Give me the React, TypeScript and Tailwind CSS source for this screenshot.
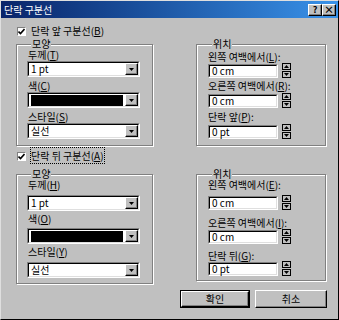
import React from 'react';

const raised =
  'bg-[#c0c0c0] border border-t-white border-l-white border-r-black border-b-black shadow-[inset_-1px_-1px_0_#808080]';

function U({ c }: { c: string }) {
  return <span className="underline underline-offset-1">{c}</span>;
}

function Label({ children, className = '' }: { children: React.ReactNode; className?: string }) {
  return <div className={`h-[12px] leading-[12px] whitespace-nowrap ${className}`}>{children}</div>;
}

function Arrow() {
  return (
    <svg width="5" height="3" viewBox="0 0 5 3">
      <path d="M0 0H5L2.5 3Z" fill="#000" />
    </svg>
  );
}

function Combo({ children, className = '' }: { children: React.ReactNode; className?: string }) {
  return (
    <div
      className={`flex h-[16px] w-[113px] border border-t-[#808080] border-l-[#808080] border-r-white border-b-white ${className}`}
    >
      <div className="flex flex-1 border border-t-black border-l-black border-r-[#dfdfdf] border-b-[#dfdfdf] bg-white">
        <div className="flex flex-1 items-center pl-[2px] leading-[12px]">{children}</div>
        <div className={`flex h-full w-[13px] items-center justify-center ${raised}`}>
          <Arrow />
        </div>
      </div>
    </div>
  );
}

function Spin() {
  return (
    <div className="ml-[4px] flex h-[15px] w-[9px] flex-col">
      <div className="flex h-[7px] items-center justify-center border border-black bg-[#c0c0c0]">
        <svg width="5" height="3" viewBox="0 0 5 3">
          <path d="M2.5 0L5 3H0Z" fill="#000" />
        </svg>
      </div>
      <div className="mt-[1px] flex h-[7px] items-center justify-center border border-black bg-[#c0c0c0]">
        <Arrow />
      </div>
    </div>
  );
}

function Field({ value, className = '' }: { value: string; className?: string }) {
  return (
    <div className={`flex items-center ${className}`}>
      <div className="h-[14px] w-[70px] border border-t-[#808080] border-l-[#808080] border-r-white border-b-white">
        <div className="flex h-full items-center border border-t-black border-l-black border-r-[#dfdfdf] border-b-[#dfdfdf] bg-white pl-[2px] leading-[12px]">
          {value}
        </div>
      </div>
      <Spin />
    </div>
  );
}

function CheckRow({ children, className = '' }: { children: React.ReactNode; className?: string }) {
  return (
    <div className={`flex h-[12px] items-center pl-[16px] ${className}`}>
      <div className="flex h-[9px] w-[9px] items-center justify-center border border-t-[#808080] border-l-[#808080] border-r-white border-b-white bg-white">
        <svg width="7" height="7" viewBox="0 0 7 7">
          <path d="M0.5 3.5L2.5 5.5L6.5 1" stroke="#000" strokeWidth="1.6" fill="none" />
        </svg>
      </div>
      <span className="ml-[5px] whitespace-nowrap leading-[12px]">{children}</span>
    </div>
  );
}

function Group({
  title,
  children,
  className = '',
}: {
  title: string;
  children: React.ReactNode;
  className?: string;
}) {
  return (
    <fieldset
      className={`border border-[#808080] shadow-[inset_1px_1px_0_#fff,1px_1px_0_#fff] ${className}`}
    >
      <legend className="ml-[4px] bg-[#c0c0c0] px-[1px] leading-[10px]">{title}</legend>
      {children}
    </fieldset>
  );
}

export default function App() {
  return (
    <div className="h-[320px] w-[339px] border border-t-[#dfdfdf] border-l-[#dfdfdf] border-r-black border-b-black bg-[#c0c0c0] font-['Noto_Sans_CJK_KR',sans-serif] text-[10px] text-black">
      <div className="flex h-[17px] items-center bg-linear-to-r from-[#0a246a] to-[#3a93ea] pr-[2px] pl-[3px]">
        <span className="flex-1 leading-[12px] text-white">단락 구분선</span>
        <div className={`flex h-[12px] w-[14px] items-center justify-center text-[9px] font-bold leading-none ${raised}`}>
          ?
        </div>
        <div className={`flex h-[12px] w-[14px] items-center justify-center text-[10px] font-bold leading-none ${raised}`}>
          ×
        </div>
      </div>

      <CheckRow className="mt-[7px]">
        단락 앞 구분선(<U c="B" />)
      </CheckRow>

      <div className="mt-[2px] flex gap-[43px] pl-[15px]">
        <Group title="모양" className="h-[107px] w-[137px] pl-[10px]">
          <Label className="pl-[1px]">
            두께(<U c="T" />)
          </Label>
          <Combo>1 pt</Combo>
          <Label className="mt-[3px] pl-[1px]">
            색(<U c="C" />)
          </Label>
          <Combo>
            <div className="mr-[2px] h-[11px] flex-1 bg-black" />
          </Combo>
          <Label className="mt-[3px] pl-[1px]">
            스타일(<U c="S" />)
          </Label>
          <Combo>실선</Combo>
        </Group>

        <Group title="위치" className="h-[107px] w-[130px] pl-[11px]">
          <Label className="mt-[2px]">
            왼쪽 여백에서(<U c="L" />):
          </Label>
          <Field value="0 cm" />
          <Label className="mt-[2px]">
            오른쪽 여백에서(<U c="R" />):
          </Label>
          <Field value="0 cm" className="mt-[1px]" />
          <Label className="mt-[3px]">
            단락 앞(<U c="P" />):
          </Label>
          <Field value="0 pt" className="mt-[1px]" />
        </Group>
      </div>

      <CheckRow className="mt-[4px]">
        <span className="outline outline-dotted outline-1 outline-black">
          단락 뒤 구분선(<U c="A" />)
        </span>
      </CheckRow>

      <div className="mt-[7px] flex gap-[43px] pl-[15px]">
        <Group title="모양" className="h-[115px] w-[137px] pl-[10px]">
          <Label className="pl-[1px]">
            두께(<U c="H" />)
          </Label>
          <Combo className="mt-[4px]">1 pt</Combo>
          <Label className="mt-[2px] pl-[1px]">
            색(<U c="O" />)
          </Label>
          <Combo className="mt-[3px]">
            <div className="mr-[2px] h-[11px] flex-1 bg-black" />
          </Combo>
          <Label className="mt-[2px] pl-[1px]">
            스타일(<U c="Y" />)
          </Label>
          <Combo className="mt-[4px]">실선</Combo>
        </Group>

        <Group title="위치" className="h-[112px] w-[130px] pl-[11px]">
          <Label>
            왼쪽 여백에서(<U c="E" />):
          </Label>
          <Field value="0 cm" className="mt-[4px]" />
          <Label className="mt-[7px]">
            오른쪽 여백에서(<U c="I" />):
          </Label>
          <Field value="0 cm" />
          <Label className="mt-[6px]">
            단락 뒤(<U c="G" />):
          </Label>
          <Field value="0 pt" className="-mt-[1px]" />
        </Group>
      </div>

      <div className="mt-[6px] flex justify-end gap-[5px] pr-[11px]">
        <div className="h-[18px] w-[70px] border border-black">
          <div className={`flex h-full items-center justify-center leading-[12px] ${raised}`}>확인</div>
        </div>
        <div className={`flex h-[18px] w-[72px] items-center justify-center leading-[12px] ${raised}`}>취소</div>
      </div>
    </div>
  );
}
